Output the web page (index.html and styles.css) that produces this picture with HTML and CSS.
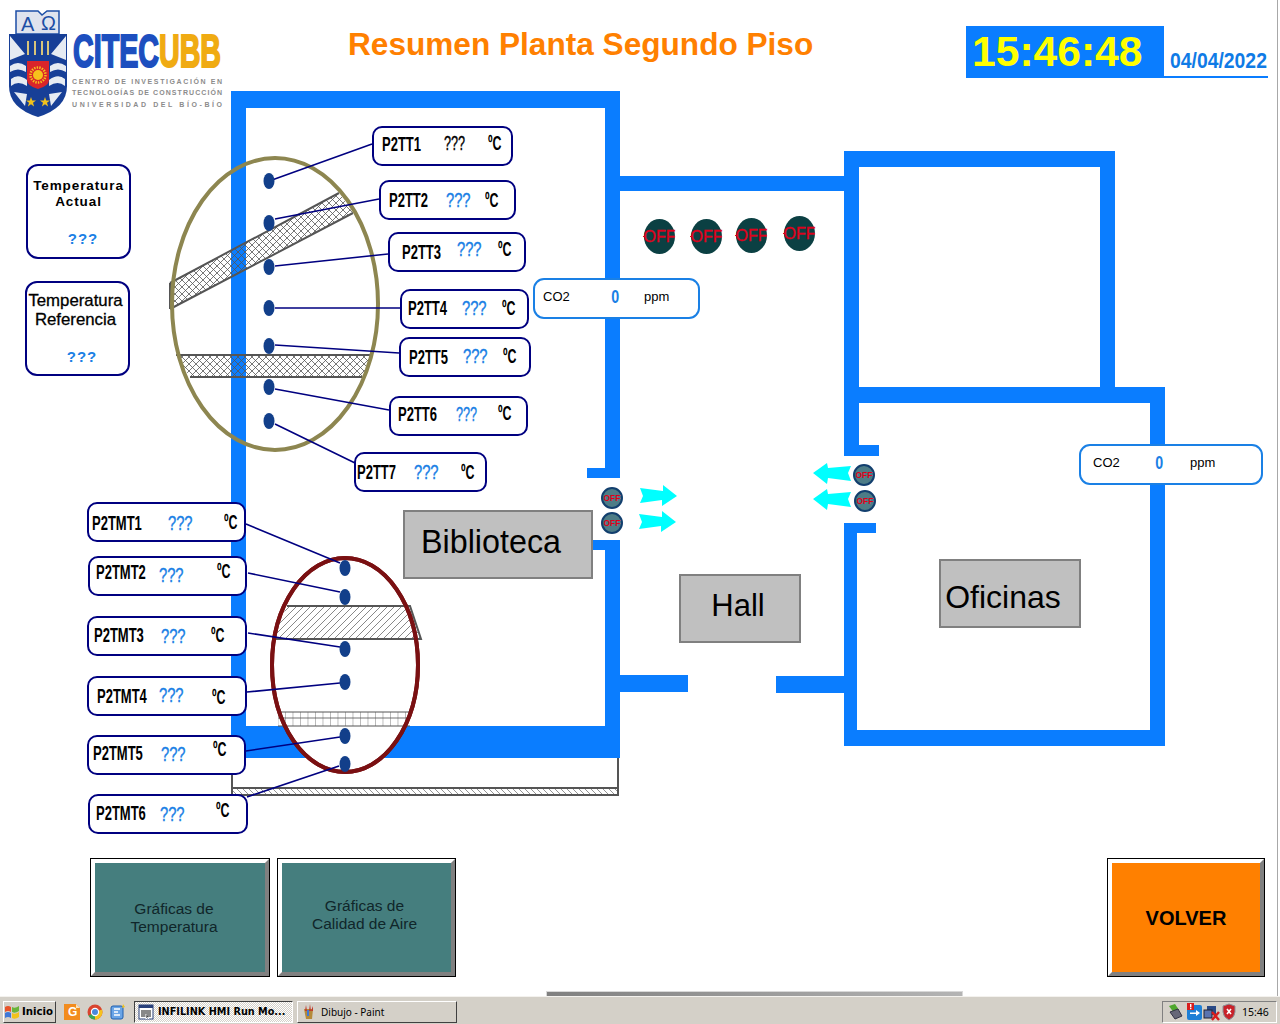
FILE: index.html
```html
<!DOCTYPE html>
<html lang="es">
<head>
<meta charset="utf-8">
<title>Resumen Planta Segundo Piso</title>
<link rel="stylesheet" href="styles.css">
</head>
<body>
<div class="screen">
<div class="canvas">

	<!-- planta: muros, achurados, sensores -->
	<svg class="plan" width="1277" height="996" viewBox="0 0 1277 996">
		<defs>
			<pattern id="cross" width="7" height="7" patternUnits="userSpaceOnUse"><path d="M0 0L7 7M7 0L0 7" stroke="#555" stroke-width=".8"/></pattern>
			<pattern id="diag" width="7" height="7" patternUnits="userSpaceOnUse"><path d="M-1 8L8 -1M-1 1L1 -1M6 8L8 6" stroke="#555" stroke-width=".7"/></pattern>
			<pattern id="back" width="6" height="6" patternUnits="userSpaceOnUse"><path d="M0 0L6 6M-1 5L1 7M5 -1L7 1" stroke="#666" stroke-width=".7"/></pattern>
			<pattern id="grid" width="7.5" height="14" patternUnits="userSpaceOnUse"><path d="M0 0V14M0 4H8" stroke="#555" stroke-width=".8" fill="none"/></pattern>
		</defs>

		<g fill="#0a7dff">
			<rect x="231" y="91" width="389" height="17"/>
			<rect x="231" y="91" width="15" height="667"/>
			<rect x="605" y="91" width="15" height="387"/>
			<rect x="587" y="468" width="33" height="10"/>
			<rect x="587" y="540" width="33" height="10"/>
			<rect x="605" y="540" width="15" height="218"/>
			<rect x="231" y="726" width="389" height="32"/>
			<rect x="620" y="176" width="225" height="15"/>
			<rect x="620" y="675" width="68" height="17"/>
			<rect x="776" y="676" width="69" height="17"/>
			<rect x="844" y="151" width="271" height="16"/>
			<rect x="844" y="151" width="15" height="305"/>
			<rect x="1100" y="151" width="15" height="250"/>
			<rect x="844" y="387" width="321" height="16"/>
			<rect x="1150" y="387" width="15" height="359"/>
			<rect x="844" y="730" width="321" height="16"/>
			<rect x="844" y="445" width="35" height="11"/>
			<rect x="844" y="523" width="32" height="10"/>
			<rect x="844" y="523" width="13" height="223"/>
		</g>

		<path class="grey" d="M232 758V790M618 758V795"/>
		<rect class="grey" x="232" y="788" width="386" height="7" fill="url(#back)"/>

		<!-- detalle muro -->
		<polygon points="170,283 339,193 353,213 170,309" fill="url(#cross)"/>
		<path class="grey" d="M170 283L339 193M170 309L353 213M170 283V309"/>
		<polygon points="176,355 372,355 362,377 190,377" fill="url(#cross)"/>
		<path class="grey" d="M176 355H372M190 377H362"/>
		<ellipse class="ring-olive" cx="275" cy="304" rx="103" ry="146"/>

		<!-- detalle losa -->
		<ellipse class="ring-red" cx="345" cy="665" rx="73" ry="107"/>
		<polygon points="287,606 410,606 421,639 272,639" fill="url(#diag)"/>
		<path class="grey" d="M287 606H410L421 639H272"/>
		<rect x="278" y="712" width="132" height="14" fill="url(#grid)"/>
		<path class="grey-thin" d="M278 712H410M278 726H410"/>
		<ellipse class="ring-red ring-top" cx="345" cy="665" rx="73" ry="107"/>

		<g class="wires">
			<path d="M272 180L372 144M275 219L379 199M275 266L388 254M275 308L400 308M275 345L399 353M275 389L389 410M275 424L355 463"/>
			<path d="M246 524L340 563M248 573L340 592M248 633L340 647M247 692L340 683M246 751L340 737M247 797L339 766"/>
		</g>
		<g fill="#123f8a">
			<ellipse cx="269" cy="181" rx="5.5" ry="8"/>
			<ellipse cx="269" cy="223" rx="5.5" ry="8"/>
			<ellipse cx="269" cy="267" rx="5.5" ry="8"/>
			<ellipse cx="269" cy="308" rx="5.5" ry="8"/>
			<ellipse cx="269" cy="346" rx="5.5" ry="8"/>
			<ellipse cx="269" cy="387" rx="5.5" ry="8"/>
			<ellipse cx="269" cy="421" rx="5.5" ry="8"/>
			<ellipse cx="345" cy="568" rx="5.5" ry="8"/>
			<ellipse cx="345" cy="597" rx="5.5" ry="8"/>
			<ellipse cx="345" cy="649" rx="5.5" ry="8"/>
			<ellipse cx="345" cy="682" rx="5.5" ry="8"/>
			<ellipse cx="345" cy="736" rx="5.5" ry="8"/>
			<ellipse cx="345" cy="764" rx="5.5" ry="8"/>
		</g>

		<!-- flechas de ventilacion -->
		<g fill="#00ffff">
			<polygon points="640,488 663,491 663,485 677,496 662,506 662,500 640,503 643,496"/>
			<polygon points="639,514 662,517 662,511 676,522 661,532 661,526 639,529 642,522"/>
			<polygon points="813,473 827,463 828,468 851,466 848,473 851,481 828,478 827,484"/>
			<polygon points="813,499 827,489 828,494 851,492 848,499 851,507 828,504 827,510"/>
		</g>
	</svg>

	<!-- logo -->
	<svg class="logo" width="224" height="120" viewBox="0 0 224 120">
		<path d="M16 11H38L42 15L47 11H59V34H16Z" fill="#dfe3ee" stroke="#1c4ea6" stroke-width="1.5"/>
		<text class="logo-greek" x="21" y="31">A</text>
		<text class="logo-greek" x="41" y="30">Ω</text>
		<path d="M9 34H67V86Q67 108 38 117Q9 108 9 86Z" fill="#173f97"/>
		<path d="M10 36L25 54L10 60ZM66 36L51 54L66 60Z" fill="#e6ebf2"/>
		<path d="M10 66Q18 60 26 66V72Q18 67 10 72ZM50 66Q58 60 66 66V72Q58 67 50 72ZM11 79Q18 73 27 80V86Q18 80 11 86ZM49 80Q58 73 65 79V86Q58 80 49 86ZM14 92L27 94L25 106ZM62 92L49 94L51 106Z" fill="#e6ebf2"/>
		<path d="M27 61H49V80Q49 86 38 89Q27 86 27 80Z" fill="#d9252a"/>
		<circle cx="38" cy="75" r="5" fill="#f6c21c"/>
		<circle cx="38" cy="75" r="7.5" fill="none" stroke="#f6c21c" stroke-width="2.5" stroke-dasharray="1.4 1.2"/>
		<path d="M28 41V55M35 41V55M42 41V55M48 41V55" stroke="#d8c47a" stroke-width="2"/>
		<path d="M31 97L32.2 100.6H36L33 102.8L34.1 106.4L31 104.2L27.9 106.4L29 102.8L26 100.6H29.8ZM45 97L46.2 100.6H50L47 102.8L48.1 106.4L45 104.2L41.9 106.4L43 102.8L40 100.6H43.8Z" fill="#f2c21c"/>
		<text class="logo-name" transform="translate(73 67) scale(.623 1)">CITEC<tspan class="logo-gold">UBB</tspan></text>
		<text class="logo-sub" x="72" y="84" textLength="150">CENTRO DE INVESTIGACIÓN EN</text>
		<text class="logo-sub" x="72" y="95" textLength="150">TECNOLOGÍAS DE CONSTRUCCIÓN</text>
		<text class="logo-sub" x="72" y="107" textLength="150">UNIVERSIDAD DEL BÍO-BÍO</text>
	</svg>

	<h1 class="title">Resumen Planta Segundo Piso</h1>
	<div class="clock">15:46:48</div>
	<div class="date"><span>04/04/2022</span></div>

	<div class="panel panel-actual">
		<div class="panel-text">Temperatura<br>Actual</div>
		<div class="panel-val">???</div>
	</div>
	<div class="panel panel-ref">
		<div class="panel-text">Temperatura<br>Referencia</div>
		<div class="panel-val">???</div>
	</div>

	<div class="tag tt1"><span class="tag-name">P2TT1</span><span class="tag-val">???</span><span class="tag-unit">ºC</span></div>
	<div class="tag tt2"><span class="tag-name">P2TT2</span><span class="tag-val">???</span><span class="tag-unit">ºC</span></div>
	<div class="tag tt3"><span class="tag-name">P2TT3</span><span class="tag-val">???</span><span class="tag-unit">ºC</span></div>
	<div class="tag tt4"><span class="tag-name">P2TT4</span><span class="tag-val">???</span><span class="tag-unit">ºC</span></div>
	<div class="tag tt5"><span class="tag-name">P2TT5</span><span class="tag-val">???</span><span class="tag-unit">ºC</span></div>
	<div class="tag tt6"><span class="tag-name">P2TT6</span><span class="tag-val">???</span><span class="tag-unit">ºC</span></div>
	<div class="tag tt7"><span class="tag-name">P2TT7</span><span class="tag-val">???</span><span class="tag-unit">ºC</span></div>

	<div class="tag tmt1"><span class="tag-name">P2TMT1</span><span class="tag-val">???</span><span class="tag-unit">ºC</span></div>
	<div class="tag tmt2"><span class="tag-name">P2TMT2</span><span class="tag-val">???</span><span class="tag-unit">ºC</span></div>
	<div class="tag tmt3"><span class="tag-name">P2TMT3</span><span class="tag-val">???</span><span class="tag-unit">ºC</span></div>
	<div class="tag tmt4"><span class="tag-name">P2TMT4</span><span class="tag-val">???</span><span class="tag-unit">ºC</span></div>
	<div class="tag tmt5"><span class="tag-name">P2TMT5</span><span class="tag-val">???</span><span class="tag-unit">ºC</span></div>
	<div class="tag tmt6"><span class="tag-name">P2TMT6</span><span class="tag-val">???</span><span class="tag-unit">ºC</span></div>

	<div class="co2 co2-hall"><span>CO2</span><b>0</b><span>ppm</span></div>
	<div class="co2 co2-office"><span>CO2</span><b>0</b><span>ppm</span></div>

	<div class="fan fan1">OFF</div>
	<div class="fan fan2">OFF</div>
	<div class="fan fan3">OFF</div>
	<div class="fan fan4">OFF</div>

	<div class="vent vent1">OFF</div>
	<div class="vent vent2">OFF</div>
	<div class="vent vent3">OFF</div>
	<div class="vent vent4">OFF</div>

	<div class="room room-lib">Biblioteca</div>
	<div class="room room-hall">Hall</div>
	<div class="room room-office">Oficinas</div>

	<button class="hmi-btn btn-temp">Gráficas de<br>Temperatura</button>
	<button class="hmi-btn btn-air">Gráficas de<br>Calidad de Aire</button>
	<button class="hmi-btn btn-back">VOLVER</button>

	<div class="hidden-bar"></div>
</div>

<div class="taskbar">
	<div class="task-btn start">
		<svg width="16" height="16" viewBox="0 0 16 16">
			<path d="M1 3Q4 1 7 3V8Q4 6 1 8Z" fill="#e8532a"/>
			<path d="M8 3Q11 5 15 2V7Q11 10 8 8Z" fill="#6ab53a"/>
			<path d="M1 9Q4 7 7 9V14Q4 12 1 14Z" fill="#3f78d8"/>
			<path d="M8 9Q11 11 15 8V13Q11 16 8 14Z" fill="#f2c21c"/>
		</svg>
		Inicio
	</div>
	<div class="quick">
		<svg width="16" height="16" viewBox="0 0 16 16">
			<path d="M0 0H12L16 4V16H0Z" fill="#f28c1e"/>
			<path d="M12 0V4H16Z" fill="#fbe0bb"/>
			<text class="quick-g" x="4" y="12">G</text>
		</svg>
		<svg width="16" height="16" viewBox="0 0 16 16">
			<circle cx="8" cy="8" r="7.5" fill="#d9442f"/>
			<path d="M8 8L1.5 11.8A7.5 7.5 0 0 0 8 15.5Z" fill="#3aa757"/>
			<path d="M8 8V15.5A7.5 7.5 0 0 0 15 5.5Z" fill="#f6c21c"/>
			<circle cx="8" cy="8" r="3.6" fill="#4a89dc" stroke="#fff" stroke-width="1.2"/>
		</svg>
		<svg width="16" height="16" viewBox="0 0 16 16">
			<rect x="1" y="2" width="12" height="13" rx="2" fill="#6aa5e6" stroke="#1f5fae"/>
			<path d="M4 5H10M4 8H8M4 11H10" stroke="#fff" stroke-width="1.6"/>
			<path d="M13 0L15 3L12 4Z" fill="#f2c21c"/>
		</svg>
	</div>
	<div class="task-btn window active">
		<svg width="16" height="16" viewBox="0 0 16 16">
			<rect x="1" y="1" width="14" height="14" fill="#fff" stroke="#29407a"/>
			<rect x="1" y="1" width="14" height="3" fill="#29407a"/>
			<rect x="3" y="6" width="10" height="7" fill="#888"/>
			<path d="M8 10L8 15L9.5 13.5L11 15" stroke="#fff" fill="#000"/>
		</svg>
		INFILINK HMI Run Mo...
	</div>
	<div class="task-btn window">
		<svg width="16" height="16" viewBox="0 0 16 16">
			<path d="M3 5H12L11 15H5Z" fill="#b58a3a"/>
			<path d="M5 1L6 7H4ZM9 0L10 7H8ZM12 2L12 7H10Z" fill="#c0392b"/>
			<path d="M6 6H8V12H6Z" fill="#3f78d8"/>
		</svg>
		Dibujo - Paint
	</div>
	<div class="tray">
		<svg width="70" height="18" viewBox="0 0 70 18">
			<path d="M3 3L9 1L13 7L8 10Z" fill="#4fa72e"/>
			<path d="M4 9L12 6L16 13L9 16Z" fill="#667" stroke="#334"/>
			<rect x="21" y="2" width="15" height="15" rx="2" fill="#1d7fd6"/>
			<path d="M24 9.5H30V7L34 10L30 13V11H24Z" fill="#fff"/>
			<rect x="21" y="0" width="7" height="7" fill="#d81e1e"/>
			<rect x="24" y="1" width="1.4" height="3.4" fill="#fff"/><rect x="24" y="5" width="1.4" height="1.2" fill="#fff"/>
			<rect x="41" y="3" width="9" height="9" fill="#2a4a86"/>
			<rect x="38" y="7" width="8" height="8" fill="#5a74b0" stroke="#223"/>
			<path d="M46 9L53 17M53 9L46 17" stroke="#d81e1e" stroke-width="2.4"/>
			<path d="M63 1L69 3V9Q69 14 63 17Q57 14 57 9V3Z" fill="#c8222a" stroke="#8b8f96"/>
			<path d="M61 6L65 11M65 6L61 11" stroke="#fff" stroke-width="1.6"/>
		</svg>
		<span class="tray-time">15:46</span>
	</div>
</div>
</div>
</body>
</html>
```

FILE: styles.css
```css
html, body {
	margin: 0;
	padding: 0;
	background: #ffffff;
}

.screen {
	width: 1280px;
	height: 1024px;
	display: flex;
	flex-direction: column;
	overflow: hidden;
	font-family: "Liberation Sans", Arial, sans-serif;
}

.canvas {
	position: relative;
	flex: none;
	box-sizing: border-box;
	width: 1278px;
	height: 996px;
	border-right: 1px solid #a8a8a8;
}

.plan, .logo {
	position: absolute;
	left: 0;
	top: 0;
}

/* svg bits */
.grey { fill-opacity: 1; stroke: #555555; stroke-width: 2; fill: none; }
rect.grey { fill: url(#back); }
.grey-thin { stroke: #555555; stroke-width: 1; fill: none; }
.ring-olive { fill: none; stroke: #8d8650; stroke-width: 4; }
.ring-red { fill: #ffffff; stroke: #7a1012; stroke-width: 4; }
.ring-top { fill: none; }
.wires path { fill: none; stroke: #000080; stroke-width: 1.6; }

.logo-greek { font-size: 20px; fill: #1c4ea6; }
.logo-name { font-size: 46px; font-weight: bold; stroke-width: 2px; fill: #1d4fbf; stroke: #1d4fbf; }
.logo-gold { fill: #f0ab12; stroke: #f0ab12; }
.logo-sub { font-size: 7px; font-weight: bold; fill: #8c8c8c; }

/* header */
.title {
	position: absolute;
	left: 348px;
	top: 26px;
	margin: 0;
	font-size: 31.6px;
	line-height: 36px;
	font-weight: bold;
	color: #ff8000;
	white-space: nowrap;
}

.clock {
	position: absolute;
	left: 966px;
	top: 26px;
	width: 198px;
	height: 52px;
	box-sizing: border-box;
	padding-left: 6px;
	background: #0a7dff;
	color: #ffff00;
	font-size: 42.6px;
	line-height: 50px;
	font-weight: bold;
	white-space: nowrap;
}

.date {
	position: absolute;
	left: 1164px;
	top: 50px;
	width: 104px;
	height: 28px;
	box-sizing: border-box;
	border-bottom: 2px solid #0a7dff;
	padding-left: 6px;
	color: #0f7be6;
	font-size: 22px;
	line-height: 22px;
	font-weight: bold;
	white-space: nowrap;
}

.date span {
	display: inline-block;
	transform: scaleX(.88);
	transform-origin: left center;
}

/* left panels */
.panel {
	position: absolute;
	box-sizing: border-box;
	width: 105px;
	height: 95px;
	border: 2px solid #000080;
	border-radius: 12px;
	background: #ffffff;
	text-align: center;
}

.panel-actual { left: 26px; top: 164px; }
.panel-ref { left: 25px; top: 281px; }

.panel-text {
	font-weight: bold;
	white-space: nowrap;
}

.panel-actual .panel-text {
	padding-top: 12px;
	font-size: 13.5px;
	letter-spacing: .9px;
	line-height: 16px;
}

.panel-ref .panel-text {
	padding-top: 8px;
	padding-right: 4px;
	font-size: 16.8px;
	font-weight: normal;
	line-height: 19px;
	-webkit-text-stroke: .3px #000000;
}

.panel-val {
	margin-top: 21px;
	color: #1a80e5;
	font-size: 15px;
	font-weight: bold;
	letter-spacing: 1px;
	line-height: 16px;
}

.panel-actual .panel-val { margin-left: 9px; }
.panel-ref .panel-val { margin-top: 20px; margin-left: 9px; }

/* sensor tags */
.tag {
	position: absolute;
	box-sizing: border-box;
	display: grid;
	align-items: center;
	height: 40px;
	border: 2px solid #000080;
	border-radius: 10px;
	background: #ffffff;
	font-size: 20px;
	line-height: 20px;
	white-space: nowrap;
}

.tag span {
	display: block;
	width: 1px;
	transform-origin: left center;
}

.tag-name {
	font-weight: bold;
	transform: translateY(var(--ny, 0)) scaleX(.65);
}

.tag-val {
	color: #1a80e5;
	font-size: 21px;
	-webkit-text-stroke: .4px #1a80e5;
	transform: translateY(var(--vy, 0)) scaleX(var(--vs, .7));
}

.tag-unit {
	font-weight: bold;
	transform: translateY(var(--uy, 0)) scaleX(.62);
}

.tt1 { left: 372px; top: 126px; width: 141px; padding-left: 8px; grid-template-columns: 62px 44px 1fr; --ny: -2px; --vy: -3px; --uy: -3px; --vs: .6; }
.tt1 .tag-val { color: #000000; -webkit-text-stroke: .4px #000000; }
.tt2 { left: 379px; top: 180px; width: 137px; padding-left: 8px; grid-template-columns: 57px 39px 1fr; }
.tt3 { left: 388px; top: 232px; width: 138px; padding-left: 12px; grid-template-columns: 55px 41px 1fr; --vy: -3px; --uy: -3px; }
.tt4 { left: 400px; top: 289px; width: 129px; padding-left: 6px; grid-template-columns: 54px 40px 1fr; --ny: -1px; --vy: -1px; --uy: -1px; }
.tt5 { left: 399px; top: 337px; width: 132px; padding-left: 8px; grid-template-columns: 54px 40px 1fr; --vy: -1px; --uy: -1px; }
.tt6 { left: 389px; top: 396px; width: 139px; padding-left: 7px; grid-template-columns: 58px 42px 1fr; --ny: -2px; --vy: -2px; --uy: -3px; --vs: .6; }
.tt7 { left: 354px; top: 452px; width: 133px; padding-left: 1px; grid-template-columns: 57px 47px 1fr; }

.tmt1 { left: 87px; top: 502px; width: 159px; padding-left: 3px; grid-template-columns: 76px 56px 1fr; --ny: 1px; --vy: 1px; }
.tmt2 { left: 88px; top: 556px; width: 159px; padding-left: 6px; grid-template-columns: 63px 58px 1fr; --ny: -4px; --vy: -1px; --uy: -5px; }
.tmt3 { left: 87px; top: 616px; width: 160px; padding-left: 5px; grid-template-columns: 67px 50px 1fr; --ny: -1px; --uy: -1px; }
.tmt4 { left: 87px; top: 676px; width: 160px; padding-left: 8px; grid-template-columns: 62px 53px 1fr; --vy: -1px; --uy: 1px; }
.tmt5 { left: 87px; top: 735px; width: 159px; padding-left: 4px; grid-template-columns: 68px 52px 1fr; --ny: -2px; --vy: -1px; --uy: -6px; }
.tmt6 { left: 88px; top: 794px; width: 160px; padding-left: 6px; grid-template-columns: 64px 56px 1fr; --ny: -1px; --uy: -4px; }

/* CO2 */
.co2 {
	position: absolute;
	box-sizing: border-box;
	display: flex;
	align-items: center;
	height: 41px;
	padding-bottom: 4px;
	border: 2px solid #1a80e5;
	border-radius: 11px;
	background: #ffffff;
	font-size: 13px;
}

.co2 span:first-child { margin-left: 8px; width: 29px; }
.co2 b {
	display: block;
	width: 9px;
	color: #1a80e5;
	font-size: 19px;
	transform: scaleX(.75);
}

.co2-hall { left: 533px; top: 278px; width: 167px; }
.co2-hall b { margin-left: 38px; margin-right: 25px; }
.co2-office { left: 1079px; top: 444px; width: 184px; }
.co2-office span:first-child { margin-left: 12px; }
.co2-office b { margin-left: 32px; margin-right: 27px; }

/* extractores */
.fan {
	position: absolute;
	width: 31px;
	height: 35px;
	display: flex;
	align-items: center;
	justify-content: center;
	border-radius: 50%;
	background: #0b4043;
	color: #e0001c;
	font-size: 16px;
	line-height: 35px;
	-webkit-text-stroke: .3px #e0001c;
}

.fan::before {
	content: "";
	position: absolute;
	left: -1px;
	top: 17px;
	width: 2px;
	height: 1px;
	background: #e0001c;
}

.fan1 { left: 644px; top: 219px; }
.fan2 { left: 691px; top: 219px; }
.fan3 { left: 736px; top: 218px; }
.fan4 { left: 784px; top: 216px; }

.vent {
	position: absolute;
	box-sizing: border-box;
	width: 22px;
	height: 22px;
	display: flex;
	align-items: center;
	justify-content: center;
	border: 2px solid #123f6e;
	border-radius: 50%;
	background: #4d7c86;
	color: #e00018;
	font-size: 8.5px;
	font-weight: bold;
}

.vent1 { left: 601px; top: 487px; }
.vent2 { left: 601px; top: 512px; }
.vent3 { left: 853px; top: 464px; }
.vent4 { left: 854px; top: 490px; }

/* rooms */
.room {
	position: absolute;
	box-sizing: border-box;
	display: flex;
	align-items: center;
	justify-content: center;
	border: 2px solid #808080;
	background: #c0c0c0;
	color: #000000;
	white-space: nowrap;
}

.room-lib { left: 403px; top: 510px; width: 190px; height: 69px; font-size: 32.3px; padding: 0 14px 4px 0; }
.room-hall { left: 679px; top: 574px; width: 122px; height: 69px; font-size: 31px; padding: 0 4px 6px 0; }
.room-office { left: 939px; top: 559px; width: 142px; height: 69px; font-size: 32px; padding: 8px 14px 0 0; }

/* HMI buttons */
.hmi-btn {
	position: absolute;
	top: 859px;
	box-sizing: border-box;
	width: 178px;
	height: 117px;
	margin: 0;
	padding: 0;
	border: 4px solid;
	border-color: #ffffff #808080 #808080 #ffffff;
	box-shadow: 0 0 0 1px #000000;
	background: #457e7e;
	color: #10262a;
	font-family: "Liberation Sans", Arial, sans-serif;
	font-size: 15.5px;
	line-height: 18px;
}

.btn-temp { left: 91px; padding-right: 12px; }
.btn-air { left: 278px; width: 177px; padding: 0 4px 6px 0; }
.btn-back {
	left: 1108px;
	width: 156px;
	background: #ff8000;
	color: #000000;
	font-size: 20px;
	font-weight: bold;
}

.hidden-bar {
	position: absolute;
	left: 546px;
	top: 991px;
	width: 417px;
	height: 5px;
	box-sizing: border-box;
	border: 1px solid #d8d8d8;
	border-bottom: 0;
	background: linear-gradient(to right, #808080, #b4b4b4);
}

/* taskbar */
.taskbar {
	flex: none;
	box-sizing: border-box;
	display: flex;
	align-items: center;
	gap: 4px;
	height: 28px;
	padding: 2px 3px 0 3px;
	border-top: 1px solid #f4f2ee;
	background: #d4d0c8;
	font-family: "DejaVu Sans", sans-serif;
	font-size: 11px;
	color: #000000;
}

.task-btn {
	box-sizing: border-box;
	display: flex;
	align-items: center;
	gap: 4px;
	height: 22px;
	padding: 0 3px;
	border: 1px solid;
	border-color: #ffffff #404040 #404040 #ffffff;
	white-space: nowrap;
}

.start {
	width: 53px;
	gap: 2px;
	padding: 0;
	font-weight: bold;
	font-size: 10.2px;
}

.quick {
	display: flex;
	gap: 7px;
	margin: 0 4px 0 4px;
}

.window {
	width: 160px;
	font-family: "Noto Sans", sans-serif;
	font-size: 10px;
}

.active {
	width: 159px;
	gap: 4px;
	font-family: "DejaVu Sans", sans-serif;
	font-size: 9.7px;
	font-weight: bold;
	border-color: #404040 #ffffff #ffffff #404040;
	background: repeating-conic-gradient(#ffffff 0 25%, #d4d0c8 0 50%) 0 0 / 2px 2px;
}

.quick-g { font-size: 12px; font-weight: bold; fill: #ffffff; font-family: "Liberation Sans", sans-serif; }

.tray {
	box-sizing: border-box;
	display: flex;
	align-items: center;
	gap: 6px;
	width: 115px;
	height: 22px;
	margin-left: auto;
	padding-left: 3px;
	border: 1px solid;
	border-color: #808080 #ffffff #ffffff #808080;
}

.tray-time {
	font-family: "Noto Sans", sans-serif;
	font-size: 10.5px;
}
```
